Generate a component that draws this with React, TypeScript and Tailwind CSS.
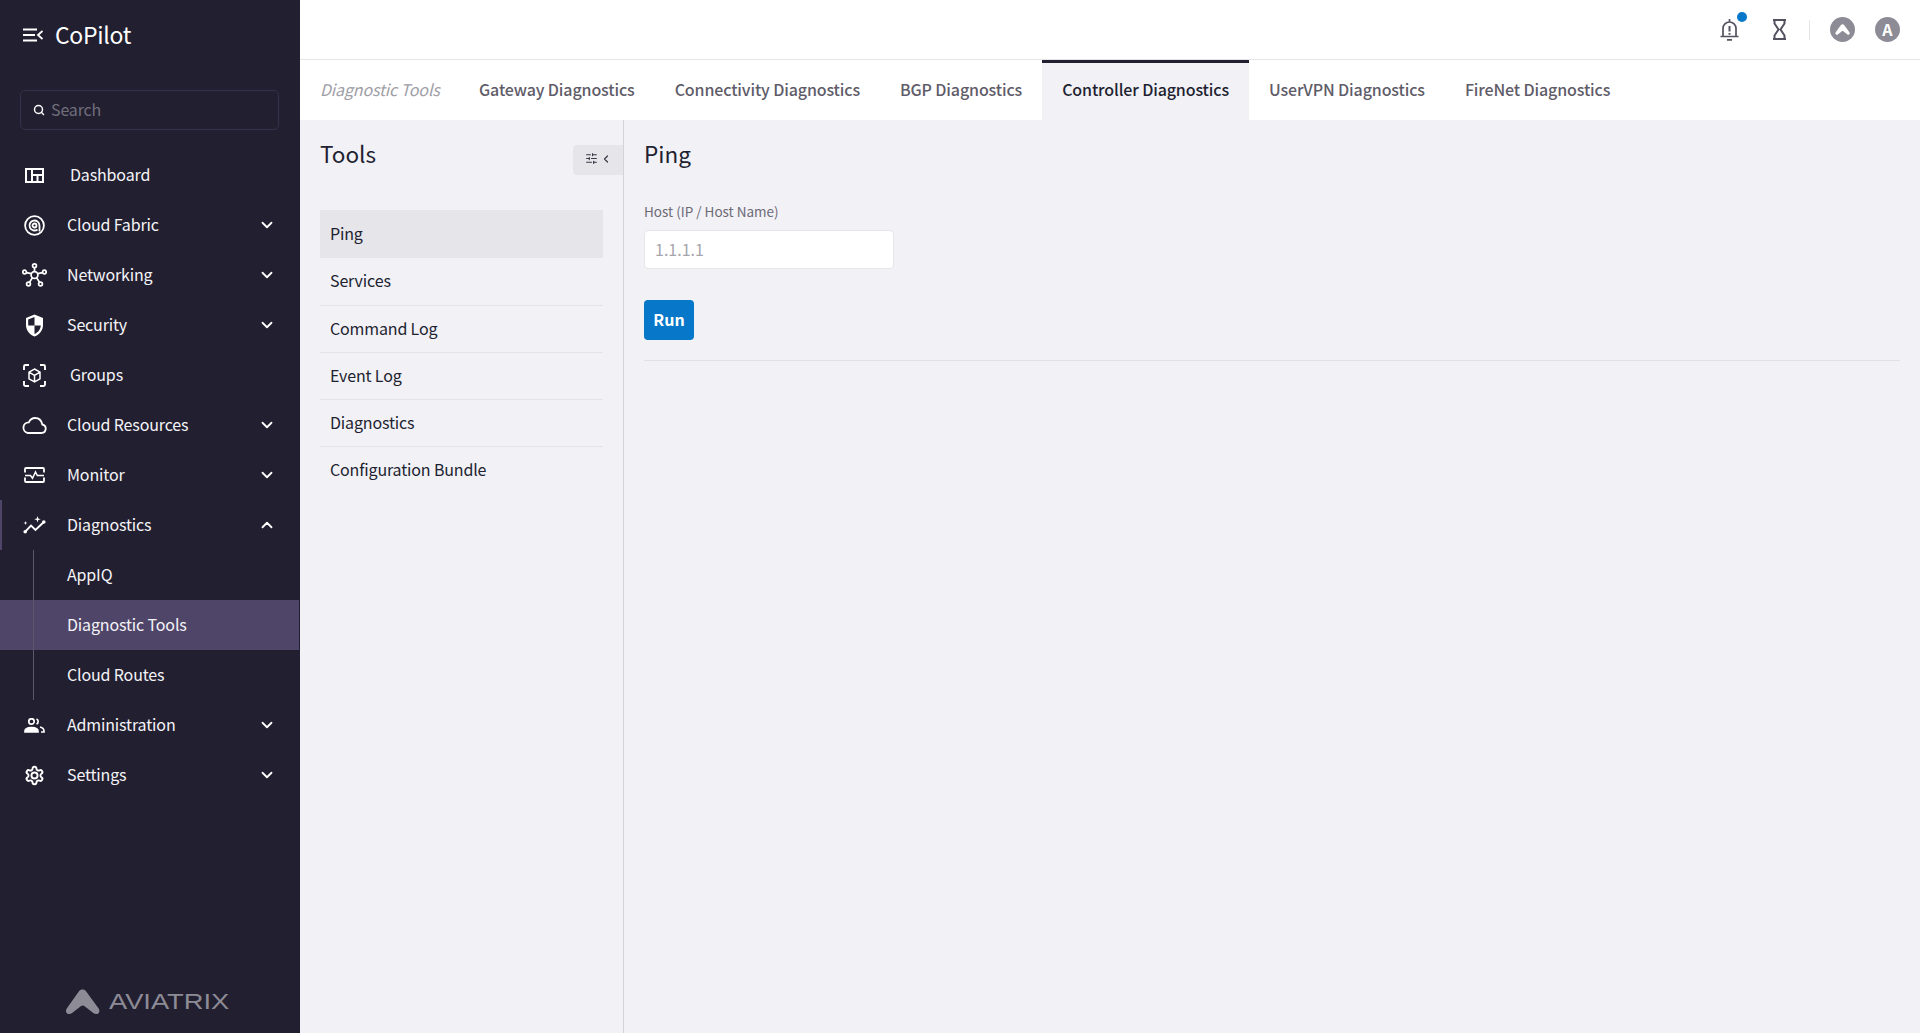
import React from "react";
import { ChevronDown, ChevronUp, Search, SlidersHorizontal, ChevronLeft } from "lucide-react";

const font = "font-['Noto_Sans_CJK_SC','Noto_Sans',sans-serif]";

function Logo({ className }: { className?: string }) {
  return (
    <svg viewBox="0 0 36 26" className={className} fill="currentColor">
      <path d="M14.2 2.2c1.900-2.600 5.700-2.600 7.600 0l12.800 17.600c1.300 1.800 1 4.300-.8 5.200-1.600.8-3.300.4-4.700-.8l-9.300-7.200c-.9-.7-2.300-.7-3.200 0l-9.300 7.200c-1.400 1.200-3.100 1.600-4.700.8-1.800-.9-2.100-3.400-.8-5.200z" />
    </svg>
  );
}

const icons: Record<string, React.ReactNode> = {
  dashboard: (
    <svg viewBox="0 0 19 15" className="w-[19px] h-[15px]" fill="none" stroke="currentColor" strokeWidth="2">
      <rect x="1" y="1" width="17" height="13" />
      <path d="M7 1v13M7 7h11M12.500 7v7" />
    </svg>
  ),
  fabric: (
    <svg viewBox="0 0 21 21" className="w-[21px] h-[21px]" fill="none" stroke="currentColor" strokeWidth="1.800">
      <circle cx="10.500" cy="10.500" r="9.400" />
      <path d="M15.500 16.500V10.500a5 5 0 1 0-2 4" />
      <circle cx="10.500" cy="10.500" r="2" />
    </svg>
  ),
  network: (
    <svg viewBox="0 0 25 24" className="w-[25px] h-[24px]" fill="none" stroke="currentColor" strokeWidth="1.700">
      <circle cx="12.500" cy="12" r="3.400" />
      <circle cx="12.500" cy="2.800" r="1.900" />
      <circle cx="2.600" cy="9" r="1.800" />
      <circle cx="22.400" cy="9" r="1.800" />
      <circle cx="6.500" cy="21" r="1.900" />
      <circle cx="18.500" cy="21" r="1.900" />
      <path d="M12.500 4.800v3.800M4.400 9.600l5 1.100M20.600 9.600l-5 1.100M7.500 19.200l3-4.600M17.500 19.200l-3-4.600" />
    </svg>
  ),
  security: (
    <svg viewBox="0 0 19 23" className="w-[19px] h-[23px]">
      <path d="M9.500.5 1 4v7c0 5.300 3.500 9.800 8.500 11.500C14.500 20.800 18 16.300 18 11V4z" fill="currentColor" />
      <path d="M9.500 3v8.500H3.200V5.500zM9.500 11.500h6.300c-.3 3.800-2.800 7.100-6.300 8.500z" fill="#221f30" />
    </svg>
  ),
  groups: (
    <svg viewBox="0 0 23 23" className="w-[23px] h-[23px]" fill="none" stroke="currentColor" strokeWidth="1.500">
      <path d="M1 6V2.500A1.500 1.500 0 0 1 2.500 1H6M17 1h3.500A1.500 1.500 0 0 1 22 2.500V6M22 17v3.500a1.500 1.500 0 0 1-1.500 1.500H17M6 22H2.500A1.500 1.500 0 0 1 1 20.500V17" strokeWidth="1.900" />
      <path d="M11.500 5 17 8.200v6.600L11.500 18 6 14.800V8.200zM6 8.200l5.500 3.200L17 8.200M11.500 11.400V18" />
    </svg>
  ),
  cloud: (
    <svg viewBox="0 0 25 17" className="w-[25px] h-[17px]" fill="none" stroke="currentColor" strokeWidth="1.800">
      <path d="M5.800 16h13.700a4.300 4.300 0 0 0 .8-8.500C19.500 3.700 16.700 1 13.200 1 10.400 1 8 2.700 6.800 5.300A5.400 5.400 0 0 0 5.800 16z" />
    </svg>
  ),
  monitor: (
    <svg viewBox="0 0 21 16" className="w-[21px] h-[16px]" fill="none" stroke="currentColor" strokeWidth="1.500">
      <path d="M1 5.500V2a1 1 0 0 1 1-1h17a1 1 0 0 1 1 1v3.500M1 10.500V14a1 1 0 0 0 1 1h17a1 1 0 0 0 1-1v-3.500" strokeWidth="1.800" />
      <path d="M1 8.500h5.500l2 2.800 3-6.300 1.800 3.500H20" />
    </svg>
  ),
  diagnostics: (
    <svg viewBox="0 0 23 18" className="w-[23px] h-[18px]" fill="currentColor">
      <path d="M2 15.800 8 9.500l4.500 4.500L20.800 6" fill="none" stroke="currentColor" strokeWidth="1.900" />
      <circle cx="2.200" cy="15.800" r="1.800" />
      <circle cx="20.800" cy="6" r="1.800" />
      <path d="M14.500 0l.8 2.500 2.500.8-2.500.8-.8 2.500-.8-2.500-2.500-.8 2.500-.8zM2.500 5l.5 1.500 1.500.5-1.500.5-.5 1.500-.5-1.500L.5 7l1.500-.5z" />
    </svg>
  ),
  admin: (
    <svg viewBox="0 0 21 15" className="w-[21px] h-[15px]" fill="none" stroke="currentColor" strokeWidth="1.700">
      <circle cx="7.500" cy="3.500" r="2.700" />
      <path d="M1 14v-.8c0-2.300 2.900-3.700 6.500-3.700s6.500 1.400 6.500 3.700v.8z" fill="currentColor" />
      <path d="M12.500 1a2.700 2.700 0 0 1 0 5M16 9c2.500.6 4 1.900 4 4v1h-3" />
    </svg>
  ),
  settings: (
    <svg viewBox="0 0 24 24" className="w-[21px] h-[21px]" fill="none" stroke="currentColor" strokeWidth="2.200" strokeLinecap="round" strokeLinejoin="round">
      <path d="M12.220 2h-.44a2 2 0 0 0-2 2v.180a2 2 0 0 1-1 1.730l-.43.250a2 2 0 0 1-2 0l-.150-.080a2 2 0 0 0-2.730.730l-.220.380a2 2 0 0 0 .730 2.730l.150.100a2 2 0 0 1 1 1.720v.510a2 2 0 0 1-1 1.740l-.150.090a2 2 0 0 0-.730 2.730l.220.380a2 2 0 0 0 2.730.730l.150-.080a2 2 0 0 1 2 0l.430.250a2 2 0 0 1 1 1.730V20a2 2 0 0 0 2 2h.440a2 2 0 0 0 2-2v-.180a2 2 0 0 1 1-1.730l.430-.250a2 2 0 0 1 2 0l.150.080a2 2 0 0 0 2.730-.730l.220-.390a2 2 0 0 0-.730-2.730l-.150-.080a2 2 0 0 1-1-1.740v-.500a2 2 0 0 1 1-1.740l.150-.090a2 2 0 0 0 .730-2.730l-.220-.380a2 2 0 0 0-2.730-.730l-.150.080a2 2 0 0 1-2 0l-.430-.250a2 2 0 0 1-1-1.730V4a2 2 0 0 0-2-2z" />
      <circle cx="12" cy="12" r="3.500" />
    </svg>
  ),
};

type NavItem = { label: string; icon: string; caret?: "up" | "down"; textLeft?: boolean };

function NavRow({ item }: { item: NavItem }) {
  return (
    <div className="relative flex h-[50px] items-center pr-[24px] text-white">
      {item.caret === "up" && <div className="absolute left-0 top-0 h-full w-[2px] bg-[#4f4569]" />}
      <div className="flex w-[69px] shrink-0 justify-center">{icons[item.icon]}</div>
      <span className={"flex-1 pb-[2px] text-[16px] leading-[24px] tracking-[-0.15px] text-[#f4f4f8] " + (item.textLeft ? "pl-[1px]" : "-ml-[2px]")}>{item.label}</span>
      {item.caret === "down" && <ChevronDown size={18} strokeWidth={2.400} />}
      {item.caret === "up" && <ChevronUp size={18} strokeWidth={2.400} />}
    </div>
  );
}

function SubRow({ label, active }: { label: string; active?: boolean }) {
  return (
    <div className={"flex h-[50px] items-center pb-[2px] pl-[67px] text-[16px] leading-[24px] tracking-[-0.15px] text-[#f4f4f8] " + (active ? "mr-[1px] bg-[#4f4569]" : "")}>
      {label}
    </div>
  );
}

function Sidebar() {
  const top: NavItem[] = [
    { label: "Dashboard", icon: "dashboard", textLeft: true },
    { label: "Cloud Fabric", icon: "fabric", caret: "down" },
    { label: "Networking", icon: "network", caret: "down" },
    { label: "Security", icon: "security", caret: "down" },
    { label: "Groups", icon: "groups", textLeft: true },
    { label: "Cloud Resources", icon: "cloud", caret: "down" },
    { label: "Monitor", icon: "monitor", caret: "down" },
    { label: "Diagnostics", icon: "diagnostics", caret: "up" },
  ];
  return (
    <aside className="flex h-[1033px] w-[300px] shrink-0 flex-col bg-[#221f30]">
      <div className="flex h-[70px] items-center pl-[23px]">
        <svg viewBox="0 0 20 14" className="w-[20px] h-[14px] text-white" fill="none" stroke="currentColor" strokeWidth="1.800">
          <path d="M0 1.500h14M0 7h12M0 12.500h14M19.500 3 15 7l4.500 4" />
        </svg>
        <span className="ml-[12px] pb-[2px] text-[23px] leading-[34px] tracking-[-0.3px] text-white">CoPilot</span>
      </div>
      <div className="mx-[20px] mt-[20px] flex h-[40px] w-[259px] items-center rounded-[5px] border border-[#37304c] pl-[12px]">
        <Search size={12} strokeWidth={3} className="text-white" />
        <span className="ml-[6px] pb-[2px] text-[16px] leading-[24px] tracking-[-0.15px] text-[#716e7c]">Search</span>
      </div>
      <nav className="mt-[20px]">
        {top.map((it) => (
          <NavRow key={it.label} item={it} />
        ))}
        <div className="relative">
          <div className="absolute left-[33px] top-0 h-[150px] w-px bg-[#5b5869]" />
          <SubRow label="AppIQ" />
          <SubRow label="Diagnostic Tools" active />
          <SubRow label="Cloud Routes" />
        </div>
        <NavRow item={{ label: "Administration", icon: "admin", caret: "down" }} />
        <NavRow item={{ label: "Settings", icon: "settings", caret: "down" }} />
      </nav>
      <div className="mt-auto mb-[18px] flex items-center pl-[65px] text-[#8d8b95]">
        <Logo className="w-[35px] h-[26px]" />
        <span className="ml-[9px] origin-left scale-x-[1.24] font-['Liberation_Sans',sans-serif] text-[22px] leading-[26px]">AVIATRIX</span>
      </div>
    </aside>
  );
}

function TopBar() {
  return (
    <header className="flex h-[60px] items-center justify-end border-b border-[#e5e5e7] bg-white pr-[20px]">
      <div className="relative mr-[34px] flex h-[30px] w-[19px] items-center justify-center text-[#55525f]">
        <svg viewBox="0 0 19 23" className="w-[19px] h-[23px]" fill="none" stroke="currentColor" strokeWidth="1.700">
          <path d="M.5 18.500h18M3 18.500v-8a6.500 6.500 0 0 1 13 0v8M7 21.800h5M9.500 1v3" />
          <path d="M9.500 8v5.500M9.500 15v1.800" strokeWidth="2" />
        </svg>
        <span className="absolute -right-[8px] -top-[3px] h-[10px] w-[10px] rounded-full bg-[#0677c9]" />
      </div>
      <svg viewBox="0 0 13 21" className="mr-[23px] w-[13px] h-[21px] text-[#55525f]" fill="none" stroke="currentColor" strokeWidth="2">
        <path d="M0 1h13M0 20h13" />
        <path d="M1.500 1v3.500L5.500 10.500 1.500 16.500V20M11.500 1v3.500L7.500 10.500 11.500 16.500V20" />
      </svg>
      <div className="mr-[20px] h-[20px] w-px bg-[#e5e5e7]" />
      <div className="mr-[20px] flex h-[25px] w-[25px] items-center justify-center rounded-full bg-[#8d8b95] text-white">
        <Logo className="w-[15px] h-[11px]" />
      </div>
      <div className="flex h-[25px] w-[25px] items-center justify-center rounded-full bg-[#8d8b95] pb-[1px] text-[16px] font-bold leading-none text-white">A</div>
    </header>
  );
}

function Tabs() {
  const tabs = ["Gateway Diagnostics", "Connectivity Diagnostics", "BGP Diagnostics", "Controller Diagnostics", "UserVPN Diagnostics", "FireNet Diagnostics"];
  return (
    <div className="flex h-[60px] items-stretch bg-white pl-[20px]">
      <div className="flex w-[139px] items-center pb-[3px] text-[16px] italic leading-[24px] tracking-[-0.15px] text-[#a09ea6]">Diagnostic Tools</div>
      {tabs.map((t) => {
        const active = t === "Controller Diagnostics";
        return (
          <div
            key={t}
            className={
              "flex items-center border-t-[3px] px-[20px] pb-[5px] text-[16px] font-medium leading-[24px] tracking-[-0.13px] " +
              (active ? "border-[#221f30] bg-[#f1f1f6] text-[#221f30]" : "border-transparent text-[#5f5c69]")
            }
          >
            {t}
          </div>
        );
      })}
    </div>
  );
}

function ToolsPanel() {
  const rest = ["Services", "Command Log", "Event Log", "Diagnostics", "Configuration Bundle"];
  return (
    <section className="relative h-[913px] w-[324px] shrink-0 border-r border-[#d3d3d8] pl-[20px] pr-[20px]">
      <h2 className="mt-[17px] text-[22.500px] font-normal leading-[32px] text-[#221f30]">Tools</h2>
      <div className="absolute right-0 top-[25px] flex h-[30px] w-[50px] items-center justify-center gap-[2px] rounded-l-[4px] bg-[#e6e5ea] pb-[3px] text-[#3a3745]">
        <SlidersHorizontal size={13} strokeWidth={2} />
        <ChevronLeft size={12} strokeWidth={2.400} />
      </div>
      <div className="mt-[41px]">
        <div className="flex h-[48px] items-center bg-[#e6e5ea] pb-[2px] pl-[10px] text-[16px] leading-[24px] tracking-[-0.15px] text-[#221f30]">Ping</div>
        {rest.map((r, i) => (
          <div
            key={r}
            className={
              "flex items-center pl-[10px] pb-[3px] text-[16px] leading-[24px] tracking-[-0.15px] text-[#221f30] " +
              (i === 0 ? "h-[48px] " : "h-[47px] ") +
              (i < rest.length - 1 ? "border-b border-[#e3e3e8]" : "")
            }
          >
            {r}
          </div>
        ))}
      </div>
    </section>
  );
}

function PingPanel() {
  return (
    <section className="flex-1 pl-[20px] pr-[20px]">
      <h2 className="mt-[17px] text-[22.500px] font-normal leading-[32px] text-[#221f30]">Ping</h2>
      <label className="mt-[32px] block text-[13.500px] leading-[20px] text-[#6d6a76]">Host (IP / Host Name)</label>
      <div className="mt-[9px] flex h-[39px] w-[250px] items-center rounded-[4px] border border-[#e6e6ea] bg-white pb-[2px] pl-[10px] text-[16px] leading-[24px] text-[#a6a5ac]">1.1.1.1</div>
      <button className="mt-[31px] flex h-[40px] w-[50px] items-center justify-center rounded-[4px] bg-[#0677c9] pb-[2px] text-[16px] font-bold leading-[24px] text-white">Run</button>
      <div className="mt-[20px] h-px bg-[#e0e0e5]" />
    </section>
  );
}

export default function App() {
  return (
    <div className={"flex h-[1033px] w-[1920px] overflow-hidden bg-[#f1f1f6] " + font}>
      <Sidebar />
      <main className="flex min-w-0 flex-1 flex-col">
        <TopBar />
        <Tabs />
        <div className="flex flex-1">
          <ToolsPanel />
          <PingPanel />
        </div>
      </main>
    </div>
  );
}
